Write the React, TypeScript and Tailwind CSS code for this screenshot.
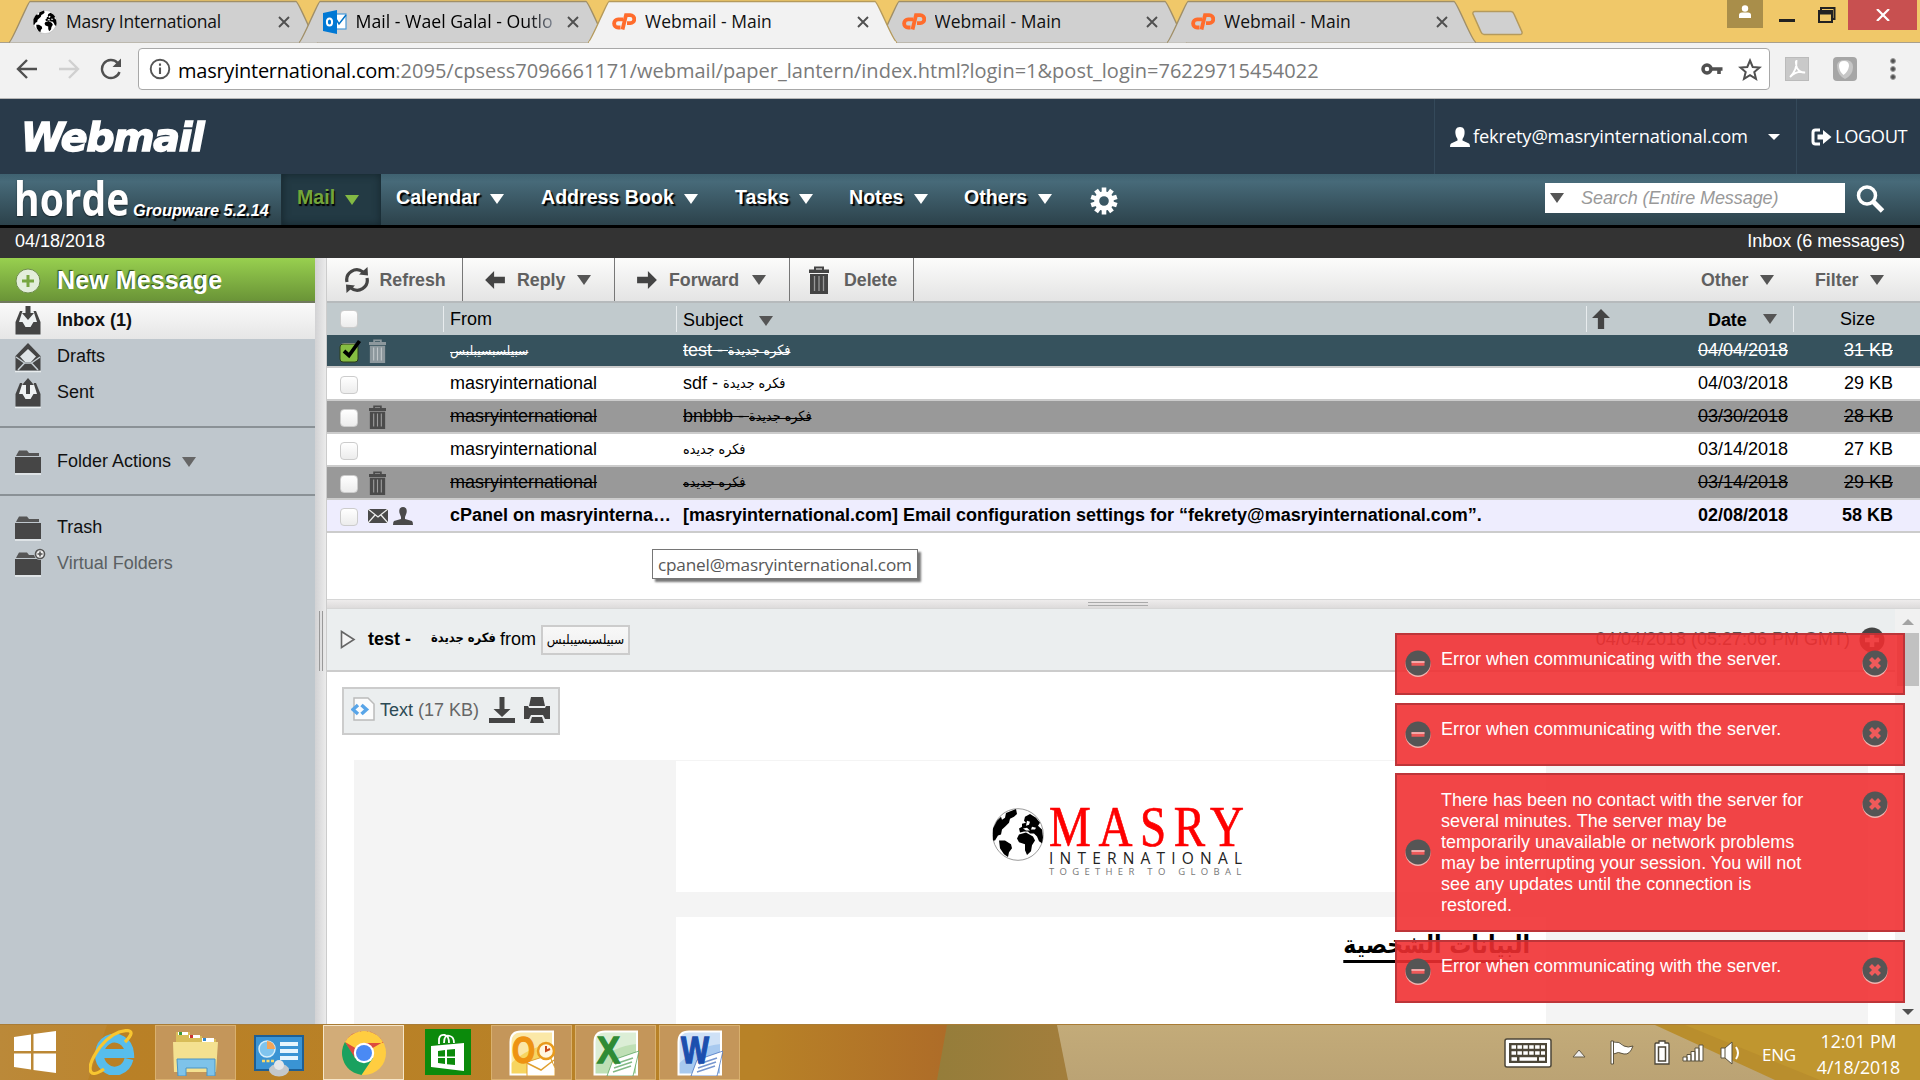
import React from "react";

const ARIAL = "font-['Liberation_Sans',sans-serif]";
const SEGOE = "font-['Open_Sans',sans-serif]";

function Globe({ className }: { className?: string }) {
  return (
    <svg viewBox="0 0 52 54" className={className} preserveAspectRatio="none">
      <ellipse cx="26" cy="27" rx="25.3" ry="26.3" fill="#fff" stroke="#999" strokeWidth="1" />
      <path d="M14 5 L24 1 L25 6 L22 9 L18 11 L17 15 L13 19 L10 22 L9 27 L6 28 L3 33 L1 33 L1 21 L5 13 L9 9 L10 12 L13 10 Z" fill="#000" />
      <path d="M7 33 L13 33 L19 37 L20 41 L17 45 L16 50 L12 47 L8 41 Z" fill="#000" />
      <path d="M33 9 L38 6 L44 10 L48 15 L46 18 L50 22 L51 30 L50 36 L47 34 L45 29 L42 26 L38 26 L36 24 L32 24 L28 25 L27 21 L30 19 L30 16 L34 15 L32 13 Z" fill="#000" />
      <path d="M27 27 L34 25 L41 29 L43 33 L40 38 L39 44 L35 48 L33 43 L33 37 L27 35 L25 31 Z" fill="#000" />
      <path d="M35 13 L38 14 L37 17 L34 18 Z M40 19 L44 20 L43 22 L39 22 Z M31 21 L35 20 L38 23 L34 23 Z" fill="#fff" />
    </svg>
  );
}

function CPanel() {
  return (
    <svg viewBox="0 0 24 17" className="h-[17px] w-6">
      <path d="M11 6.300 H6.200 a3.800 3.800 0 0 0 0 8.200 H8.500" fill="none" stroke="#ff6c2c" strokeWidth="3.800" />
      <path d="M10.500 16.500 L14 2.200 H18.300 a3.700 3.700 0 0 1 0 8 H15" fill="none" stroke="#ff6c2c" strokeWidth="3.800" />
    </svg>
  );
}

function OutlookFav() {
  return (
    <svg viewBox="0 0 24 24" className="size-6">
      <rect x="11" y="4" width="12" height="15" fill="#fff" stroke="#4a9ad8" strokeWidth="1.200" />
      <path d="M13 9 L16 14 L23 5" stroke="#0072c6" fill="none" strokeWidth="1.500" />
      <path d="M0 3 L14 0 V24 L0 21 Z" fill="#0078d4" />
      <ellipse cx="6.500" cy="12" rx="2.600" ry="3.600" fill="none" stroke="#fff" strokeWidth="2" />
    </svg>
  );
}

type TabInfo = { title: string; icon: React.ReactNode; active?: boolean; fade?: boolean };
const tabs: TabInfo[] = [
  { title: "Masry International", icon: <Globe className="size-6" /> },
  { title: "Mail - Wael Galal - Outlo", icon: <OutlookFav />, fade: true },
  { title: "Webmail - Main", icon: <CPanel />, active: true },
  { title: "Webmail - Main", icon: <CPanel /> },
  { title: "Webmail - Main", icon: <CPanel /> },
];

function Tab({ t }: { t: TabInfo }) {
  return (
    <div className={`relative h-[43px] w-[289.500px] shrink-0 ${t.active ? "z-10" : ""}`}>
      <svg viewBox="0 0 309 43" className="absolute left-0 top-0 h-[43px] w-[309px]">
        <path
          d="M0 42.500 C3 42 19 1.500 21 1.500 H287 C290 1.500 305 42 309 42.500"
          fill={t.active ? "#f2f2f2" : "#d0d0d0"}
          stroke={t.active ? "#b59a5c" : "#a08f68"}
          strokeWidth="1.400"
        />
        {t.active && <path d="M1 42.500 H308" stroke="#f2f2f2" strokeWidth="2" />}
      </svg>
      <div className="relative flex h-[43px] items-center pl-6 pr-[9px]">
        <div className="flex w-[33px] shrink-0 items-center">{t.icon}</div>
        <div className={`flex-1 overflow-hidden whitespace-nowrap ${t.fade ? "bg-linear-to-r from-black from-82% to-gray-400 bg-clip-text text-[17.700px] text-transparent" : t.title.startsWith("Masry") ? "text-[17.500px] tracking-[-0.250px] text-[#111]" : "text-[17.500px] text-[#111]"}`}>
          {t.title}
        </div>
        <svg viewBox="0 0 12 12" className="ml-2.5 size-3 shrink-0">
          <path d="M1 1 L11 11 M11 1 L1 11" stroke="#505050" strokeWidth="1.900" />
        </svg>
      </div>
    </div>
  );
}

function Browser() {
  return (
    <div className={`${SEGOE}`}>
      <div className="flex h-[43px] border-b border-[#a9a08c] bg-[#f0c869]">
        <div className="flex w-[1466px] shrink-0 pl-[9px]">
          {tabs.map((t, i) => <Tab key={i} t={t} />)}
        </div>
        <svg viewBox="0 0 52 26" className="ml-1.5 mt-[10px] h-[26px] w-[52px]">
          <path d="M3 1.500 H39 Q41 1.500 42 4 L50 22 Q50.500 24.500 48 24.500 H12 Q10 24.500 9 22 L1 4 Q0.500 1.500 3 1.500Z" fill="#d0d0d0" stroke="#b59a5c" strokeWidth="1.500" />
        </svg>
        <div className="ml-auto flex h-[31px] pr-[3px]">
          <div className="flex h-7 w-9 justify-center bg-[#a98e4a] pt-[5px]">
            <svg viewBox="0 0 14 14" className="size-3.5"><circle cx="7" cy="3.500" r="3.200" fill="#fff" /><path d="M1 13 V10 Q1 7.500 4 7.500 H10 Q13 7.500 13 10 V13 Z" fill="#fff" /></svg>
          </div>
          <div className="ml-4 mt-[19px] h-[3px] w-4 bg-[#222]" />
          <svg viewBox="0 0 20 18" className="ml-[22px] mt-1.5 h-[18px] w-5">
            <path d="M4 4 V2 H17.500 V13 H15" fill="none" stroke="#222" strokeWidth="2" />
            <rect x="2" y="5" width="13" height="11" fill="none" stroke="#222" strokeWidth="2" /><path d="M1 6.500 H16" stroke="#222" strokeWidth="4" />
          </svg>
          <div className="ml-[11px] flex h-[30px] w-[69px] items-center justify-center bg-[#c85050]">
            <svg viewBox="0 0 14 12" className="h-3 w-3.5"><path d="M1 0 L13 12 M13 0 L1 12" stroke="#fff" strokeWidth="2.200" /></svg>
          </div>
        </div>
      </div>
      <div className="flex h-14 items-center border-b border-[#b6b6b6] bg-[#f2f2f2] pb-[3px] pl-4">
        <svg viewBox="0 0 22 20" className="h-5 w-[22px]"><path d="M21 10 H2 M11 1 L2 10 L11 19" fill="none" stroke="#505050" strokeWidth="2.400" /></svg>
        <svg viewBox="0 0 22 20" className="ml-5 h-5 w-[22px]"><path d="M1 10 H20 M11 1 L20 10 L11 19" fill="none" stroke="#d0d0d0" strokeWidth="2.400" /></svg>
        <svg viewBox="0 0 22 22" className="ml-5 size-[22px]"><path d="M19.500 14 A9 9 0 1 1 17.500 4.800" fill="none" stroke="#505050" strokeWidth="2.400" /><path d="M21 0.500 V9 H12.500 Z" fill="#505050" /></svg>
        <div className="ml-4 flex h-[42px] w-[1632px] items-center rounded-[4px] border border-[#a8a8a8] bg-white pl-2.5">
          <svg viewBox="0 0 22 22" className="size-[22px]"><circle cx="11" cy="11" r="9.300" fill="none" stroke="#555" strokeWidth="1.900" /><path d="M11 9.500 V16 M11 5.500 V7.700" stroke="#555" strokeWidth="2.100" /></svg>
          <div className="ml-[7px] mt-[3px] whitespace-nowrap text-[20px] text-[#7a7a7a]">
            <span className="tracking-[-0.240px] text-black">masryinternational.com</span>:2095/cpsess7096661171/webmail/paper_lantern/index.html?login=1&amp;post_login=76229715454022
          </div>
          <svg viewBox="0 0 22 14" className="ml-auto h-3.5 w-[22px]"><circle cx="6" cy="7" r="4" fill="none" stroke="#505050" strokeWidth="3.500" /><path d="M10 7 H21.500 M18 7 V12" stroke="#505050" strokeWidth="3.600" /></svg>
          <svg viewBox="0 0 24 24" className="ml-[15px] mr-[7px] mt-0.5 size-6"><path d="M12 2.500 L14.700 9 L21.500 9.500 L16.300 14 L18 20.800 L12 17.200 L6 20.800 L7.700 14 L2.500 9.500 L9.300 9 Z" fill="none" stroke="#505050" strokeWidth="2" /></svg>
        </div>
        <svg viewBox="0 0 24 24" className="ml-[15px] size-6"><rect x="0.500" y="0.500" width="23" height="23" fill="#c9c9c9" stroke="#bbb" /><path d="M5 20 Q12 13 11.500 4 Q10 4 12 11 Q15 16 20 15.500 Q12 13 5 20" fill="none" stroke="#fff" strokeWidth="1.800" /></svg>
        <svg viewBox="0 0 24 24" className="ml-6 size-6"><rect width="24" height="24" rx="4" fill="#a6a6a6" /><path d="M4 8 Q5 3 12 3 Q20 3 20 10 Q20 18 12 22 Q4 18 4 8" fill="#c6c6c6" /><path d="M6 9 Q6 4 11 4 Q16 4 16 9 Q15 15 10.500 18 Q6 14 6 9" fill="#fff" /></svg>
        <div className="ml-[34px] flex flex-col gap-1">
          <i className="size-1 rounded-full bg-[#505050] outline outline-[#505050]/60" /><i className="size-1 rounded-full bg-[#505050] outline outline-[#505050]/60" /><i className="size-1 rounded-full bg-[#505050] outline outline-[#505050]/60" />
        </div>
      </div>
    </div>
  );
}

function WebmailHeader() {
  return (
    <div className={`flex h-[75px] items-stretch bg-[#293a4a] text-white ${SEGOE}`}>
      <div className="flex items-center pl-[21px] pt-0.5">
        <div className="origin-left scale-x-[1.015] whitespace-nowrap font-['DejaVu_Sans',sans-serif] text-[39px] font-bold italic leading-none tracking-[-1.300px] [-webkit-text-stroke:1.500px_white]">Webmail</div>
      </div>
      <div className="ml-auto flex w-[362px] items-center border-l border-[#34495a] pl-[15px]">
        <svg viewBox="0 0 20 20" className="size-5"><path d="M10 0 C14 0 15 3 14.500 7 C14 10 13 11 12.500 12 V13.500 L19 16.500 Q20 17 20 20 H0 Q0 17 1 16.500 L7.500 13.500 V12 C7 11 6 10 5.500 7 C5 3 6 0 10 0" fill="#fff" /></svg>
        <span className="-mt-0.5 ml-[3px] w-[295px] whitespace-nowrap text-[18.300px] tracking-[-0.150px]">fekrety@masryinternational.com</span>
        <i className="border-x-[6px] border-t-[6px] border-x-transparent border-t-white" />
      </div>
      <div className="flex w-[124px] items-center border-l border-[#34495a] pl-[14px]">
        <svg viewBox="0 0 21 18" className="h-[18px] w-[21px]"><path d="M9 2 H4.500 Q2 2 2 4.500 V13.500 Q2 16 4.500 16 H9" fill="none" stroke="#fff" strokeWidth="3" /><path d="M6.500 6.500 H12 V2 L20.500 9 L12 16 V11.500 H6.500Z" fill="#fff" /></svg>
        <span className="-mt-0.5 ml-[3px] text-[18.300px] tracking-[-0.400px]">LOGOUT</span>
      </div>
    </div>
  );
}

function Tri({ className = "border-t-[#555]" }: { className?: string }) {
  return <i className={`block shrink-0 border-x-[7.500px] border-t-[10px] border-x-transparent ${className}`} />;
}

const nav = [
  { label: "Calendar", w: "w-[145px]", t: "w-[93px]" },
  { label: "Address Book", w: "w-[194px]", t: "w-[142px]" },
  { label: "Tasks", w: "w-[114px]", t: "w-[63px]" },
  { label: "Notes", w: "w-[115px]", t: "w-[64px]" },
  { label: "Others", w: "w-[125px]", t: "w-[73px]" },
];

function HordeBar() {
  return (
    <div className={`flex h-[54px] border-b-[3px] border-black bg-linear-to-b from-[#3f6271] via-[#476a79] via-15% to-[#2c424b] text-white ${ARIAL}`}>
      <div className="flex w-[282px] items-end border-r border-[#1d2f37] pb-[6px] pl-[14px]">
        <div className="w-[119px]">
          <div className="mb-[-4px] origin-left scale-x-[0.830] font-['Open_Sans',sans-serif] text-[47px] font-bold leading-[49px] [text-shadow:0_1px_2px_#0008]">horde</div>
        </div>
        <span className="-mb-px whitespace-nowrap text-[16.300px] font-bold italic leading-5 [text-shadow:2px_2px_1px_#000]">Groupware 5.2.14</span>
      </div>
      <div className="flex w-[99px] items-center bg-[#233a44] pb-1 pl-[15px] shadow-[inset_0_0_8px_#14242b]">
        <span className="w-[48px] text-[19.600px] font-bold text-[#74a63b] [text-shadow:1px_2px_1px_#000]">Mail</span>
        <Tri className="mt-1 border-t-[#83b944]" />
      </div>
      <div className="flex items-center pb-1 pl-[15px]">
        {nav.map((n) => (
          <div key={n.label} className={`flex items-center ${n.w}`}>
            <span className={`${n.t} whitespace-nowrap text-[19.600px] font-bold [text-shadow:2px_2px_1px_#000]`}>{n.label}</span>
            <Tri className="ml-px mt-1 border-t-white" />
          </div>
        ))}
        <svg viewBox="0 0 28 28" className="ml-px mt-1.5 size-7">
          {[0, 36, 72, 108, 144, 180, 216, 252, 288, 324].map((a) => (
            <rect key={a} x="11.700" y="0.500" width="4.600" height="8" fill="#fff" transform={`rotate(${a} 14 14)`} />
          ))}
          <circle cx="14" cy="14" r="7.300" fill="none" stroke="#fff" strokeWidth="5" />
        </svg>
      </div>
      <div className="ml-auto mt-[9px] flex h-[30px] w-[300px] items-center bg-white pl-[5px]">
        <Tri />
        <span className="ml-[17px] whitespace-nowrap text-[18px] italic tracking-[-0.070px] text-[#999]">Search (Entire Message)</span>
      </div>
      <svg viewBox="0 0 30 30" className="ml-[11px] mr-[34px] mt-2.5 size-[30px]">
        <circle cx="11" cy="11.500" r="8.500" fill="none" stroke="#fff" strokeWidth="3.500" /><path d="M17.500 18 L26.500 27" stroke="#fff" strokeWidth="5" />
      </svg>
    </div>
  );
}

function TrayIcon({ kind }: { kind: "in" | "draft" | "out" }) {
  return (
    <svg viewBox="0 0 26 28" className="h-7 w-[26px] overflow-visible">
      <path d="M0 28.500 H26" stroke="#e8ecee" strokeWidth="1.500" />
      {kind === "draft" ? (
        <>
          <path d="M13 0 L25.500 13 V27.500 H0.500 V13 Z" fill="#444" />
          <path d="M13 6 L21 13.500 L16 19 H10 L5 13.500 Z" fill="#dfe4e7" />
          <path d="M1 14 L9.500 20 L3 27 M25 14 L16.500 20 L23 27 M9.500 20 H16.500" fill="none" stroke="#c5cdd2" strokeWidth="1.500" />
        </>
      ) : (
        <>
          <path d="M0.500 27.500 V15 L5 4 H21 L25.500 15 V27.500 Z" fill="#444" />
          <path d="M7.500 4 L4 15 H7.500 L10.500 20 H15.500 L18.500 15 H22 L18.500 4Z" fill="#eef1f2" />
          {kind === "in"
            ? <path d="M10.500 -1 H15.500 V6 H19 L13 13 L7 6 H10.500Z" fill="#444" />
            : <path d="M11 15 H15 V6 H19 L13 -1 L7 6 H11Z" fill="#444" />}
        </>
      )}
    </svg>
  );
}

function Folder({ plus }: { plus?: boolean }) {
  return (
    <svg viewBox="0 0 30 26" className="h-[26px] w-[30px] overflow-visible">
      <path d="M2 5 L4 1.500 H12 L14 4 H24 V7 H1 Z" fill="#555" />
      <path d="M0 8 H26 V24 H0 Z" fill="#464646" /><path d="M0 25 H26" stroke="#e8ecee" strokeWidth="1.500" />
      {plus && <><circle cx="25" cy="3" r="6" fill="#c0c8cd" /><circle cx="25" cy="3" r="4.500" fill="#eee" stroke="#555" strokeWidth="1.600" /><path d="M25 0.500 V5.500 M22.500 3 H27.500" stroke="#555" strokeWidth="1.600" /></>}
    </svg>
  );
}

function SideRow({ icon, label, className = "" }: { icon: React.ReactNode; label: string; className?: string }) {
  return (
    <div className={`flex h-9 items-center pl-[15px] text-[18px] ${className}`}>
      <div className="flex w-[42px] items-center">{icon}</div>
      <span className="-mt-px whitespace-nowrap">{label}</span>
      {label === "Folder Actions" && <Tri className="ml-[11px] border-t-[#666]" />}
    </div>
  );
}

function Sidebar() {
  return (
    <div className="w-[315px] shrink-0 bg-[#bfc7cd] text-[#111]">
      <div className="flex h-[45px] items-center border-b-2 border-[#71795f] bg-linear-to-b from-[#98d04f] to-[#6a9437] pl-[15px] pt-0.5">
        <svg viewBox="0 0 26 26" className="size-[26px]"><circle cx="13" cy="13" r="12" fill="#e3eedb" stroke="#6f8f4c" /><path d="M13 7 V19 M7 13 H19" stroke="#77a640" strokeWidth="3" /></svg>
        <span className="ml-4 whitespace-nowrap text-[25px] font-bold leading-none tracking-[0.120px] text-white [text-shadow:-1px_-1px_1px_#2d4a12]">New Message</span>
      </div>
      <SideRow icon={<TrayIcon kind="in" />} label="Inbox (1)" className="bg-linear-to-b from-[#fafafa] to-[#e6e6e6] font-bold" />
      <SideRow icon={<TrayIcon kind="draft" />} label="Drafts" />
      <SideRow icon={<TrayIcon kind="out" />} label="Sent" />
      <div className="mt-[15px] border-y-2 border-[#8a9196] py-[15px]">
        <SideRow icon={<Folder />} label="Folder Actions" className="pt-px" />
      </div>
      <div className="mt-[13px]">
        <SideRow icon={<Folder />} label="Trash" className="pt-px" />
        <SideRow icon={<Folder plus />} label="Virtual Folders" className="pt-px text-[#5a5f62]" />
      </div>
    </div>
  );
}

function Trash({ className = "", fill = "#444" }: { className?: string; fill?: string }) {
  return (
    <svg viewBox="0 0 20 28" className={className} preserveAspectRatio="none">
      <path d="M6 4 V1.500 H14 V4" fill="none" stroke={fill} strokeWidth="2" />
      <path d="M0 3.500 H20 V7 H0Z M1 8 H19 V28 H1Z" fill={fill} />
      <path d="M5.500 10 V25 M10 10 V25 M14.500 10 V25" stroke="#fff" strokeOpacity="0.450" strokeWidth="1.300" />
    </svg>
  );
}

function Arrow({ className = "" }: { className?: string }) {
  return <svg viewBox="0 0 22 20" className={`h-[18px] w-[22px] ${className}`}><path d="M0 10 L10 0 V6.500 H22 V13.500 H10 V20 Z" fill="#444" /></svg>;
}

function Toolbar() {
  return (
    <div className="flex h-[45px] border-b-2 border-[#b6babc] bg-linear-to-b from-[#fcfcfb] to-[#e4e4e4] text-[17.800px] font-bold text-[#606060]">
      <div className="flex w-[136px] items-center border-r border-[#777] pl-[17px] pt-px">
        <svg viewBox="0 0 26 26" className="size-[26px]"><path d="M3 15 A10 10 0 0 1 19 5 M23 11 A10 10 0 0 1 7 21" fill="none" stroke="#444" strokeWidth="3.200" /><path d="M15 7.500 L24 8.500 L23.500 0Z M11 18.500 L2 17.500 L2.500 26Z" fill="#444" /></svg>
        <span className="ml-[9.500px]">Refresh</span>
      </div>
      <div className="flex w-[152px] items-center border-r border-[#777] pl-[21px] pt-px"><Arrow /><span className="ml-[11px] w-[59.500px]">Reply</span><Tri /></div>
      <div className="flex w-[175px] items-center border-r border-[#777] pl-[21px] pt-px"><Arrow className="rotate-180" /><span className="ml-[11px] w-[83px]">Forward</span><Tri /></div>
      <div className="flex w-[124px] items-center border-r border-[#777] pl-[19px] pt-px"><Trash className="h-7 w-5" /><span className="ml-[15px] tracking-[-0.050px]">Delete</span></div>
      <div className="ml-auto flex items-center pt-px"><span className="w-[59px]">Other</span><Tri /><span className="ml-[41px] w-[55px]">Filter</span><Tri className="mr-9 border-t-[#555]" /></div>
    </div>
  );
}

function Check({ on }: { on?: boolean }) {
  return (
    <div className="relative h-[18px] w-[18px] rounded-[4px] border border-[#ccc] bg-linear-to-b from-white to-[#ececec]">
      {on && (
        <svg viewBox="0 0 24 24" className="absolute -left-[2px] -top-[5px] size-6"><rect x="1" y="5" width="18" height="18" rx="3" fill="#86bd42" stroke="#2c3f1a" /><path d="M5 12 L10 16.500 L20.500 2" fill="none" stroke="#000" strokeWidth="3.800" /></svg>
      )}
    </div>
  );
}

function Ar({ children, className = "text-[14.200px]" }: { children: string; className?: string }) {
  return <span dir="rtl" className={`align-[1px] font-['DejaVu_Sans_Condensed','DejaVu_Sans',sans-serif] font-stretch-condensed leading-none tracking-normal ${className}`}>{children}</span>;
}

type Row = { from: React.ReactNode; subject: React.ReactNode; date: string; size: string; kind: "sel" | "plain" | "del" | "new" };
const rows: Row[] = [
  { from: <Ar className="text-[13.700px]">سبيلسبسيبلبس</Ar>, subject: <>test - <Ar>فكره جديدة</Ar></>, date: "04/04/2018", size: "31 KB", kind: "sel" },
  { from: "masryinternational", subject: <>sdf - <Ar>فكره جديدة</Ar></>, date: "04/03/2018", size: "29 KB", kind: "plain" },
  { from: "masryinternational", subject: <>bnbbb - <Ar>فكره جديدة</Ar></>, date: "03/30/2018", size: "28 KB", kind: "del" },
  { from: "masryinternational", subject: <Ar>فكره جديده</Ar>, date: "03/14/2018", size: "27 KB", kind: "plain" },
  { from: "masryinternational", subject: <Ar>فكره جديده</Ar>, date: "03/14/2018", size: "29 KB", kind: "del" },
  { from: "cPanel on masryinterna…", subject: "[masryinternational.com] Email configuration settings for “fekrety@masryinternational.com”.", date: "02/08/2018", size: "58 KB", kind: "new" },
];
const rowStyle = {
  sel: "bg-[#36525d] text-white",
  plain: "bg-white",
  del: "bg-[#999]",
  new: "bg-[#eeedfe] font-bold",
};

function MessageList() {
  return (
    <div className="relative h-[296px] bg-white text-[18px] text-black">
      <div className="flex h-8 items-center bg-[#c1cacd]">
        <div className="w-[116px] pl-[13px]"><Check /></div>
        <div className="flex h-[26px] w-[233px] items-center border-l border-[#e8ecee] pl-1.5">From</div>
        <div className="flex h-[26px] w-[910px] items-center border-l border-[#e8ecee] pl-1.5 pt-[3px]">Subject<Tri className="ml-4 border-t-[#555]" /></div>
        <div className="flex h-[26px] flex-1 items-center border-l border-[#e8ecee] pl-[3px]">
          <Arrow className="w-5 rotate-90" />
          <span className="ml-[96px] mt-0.5 font-bold tracking-[-0.100px]">Date</span><Tri className="ml-[16px] border-t-[#555]" />
        </div>
        <div className="flex h-[26px] w-[127px] items-center border-l border-[#e8ecee] pl-[46px]">Size</div>
      </div>
      {rows.map((r, i) => {
        const strike = r.kind === "sel" || r.kind === "del" ? "line-through" : "";
        return (
          <div key={i} className={`flex h-[33px] items-center whitespace-nowrap border-b-2 border-[#ccc] ${rowStyle[r.kind]}`}>
            <div className="flex w-[42px] pl-[13px] pt-0.5"><Check on={r.kind === "sel"} /></div>
            <div className="flex w-[81px] items-center gap-[5px]">
              {strike && <Trash className="h-6 w-[17px]" fill={r.kind === "sel" ? "#8d989d" : "#4b4b4b"} />}
              {r.kind === "new" && (
                <>
                  <svg viewBox="0 0 20 14" className="-ml-px h-3.5 w-5"><rect width="20" height="14" fill="#4a4a4a" /><path d="M0 0 L10 8 L20 0 M0 14 L7 6 M20 14 L13 6" fill="none" stroke="#eee" strokeWidth="1.300" /></svg>
                  <svg viewBox="0 0 20 18" className="h-[18px] w-5"><path d="M10 0 C14 0 14 4 13.500 6 L12 10 V12 L19 14 Q20 15 20 18 H0 Q0 15 1 14 L8 12 V10 L6.500 6 C6 4 6 0 10 0" fill="#4a4a4a" /></svg>
                </>
              )}
            </div>
            <div className={`w-[233px] truncate ${strike}`}>{r.from}</div>
            <div className={`flex-1 ${strike}`}>{r.subject}</div>
            <div className={`w-[105px] text-right ${strike}`}>{r.date}</div>
            <div className={`w-[132px] pr-[27px] text-right ${strike}`}>{r.size}</div>
          </div>
        );
      })}
      <div className={`absolute left-[325px] top-[246px] flex h-[30px] w-[266px] items-center whitespace-nowrap border border-[#767676] bg-white pl-[5px] pt-px text-[17.200px] tracking-[-0.200px] text-[#575757] shadow-[3px_3px_2px_#777] ${SEGOE}`}>
        cpanel@masryinternational.com
      </div>
    </div>
  );
}

function Preview() {
  return (
    <div className="flex min-h-0 flex-1">
      <div className="flex w-[1568px] shrink-0 flex-col overflow-hidden bg-white">
        <div className="flex h-[63px] shrink-0 items-center whitespace-nowrap border-b-2 border-[#ccc] bg-[#ebeeef] pl-[13px] text-[18px] text-black">
          <svg viewBox="0 0 16 19" className="h-[19px] w-4"><path d="M1.500 1.500 L14 9.500 L1.500 17.500Z" fill="#f4f4f4" stroke="#666" strokeWidth="1.600" /></svg>
          <b className="ml-3 w-[63px]">test -</b>
          <div className="-mt-0.5 flex w-[69px] items-center"><Ar className="text-[12.800px] font-bold">فكره جديدة</Ar></div>
          <span>from</span>
          <div className="ml-[5px] flex h-[30px] w-[89px] items-center justify-center border-2 border-[#ccc] bg-linear-to-b from-[#f8f8f8] to-[#efefef]"><Ar className="text-[13.500px]">سبيلسبسيبلبس</Ar></div>
          <span className="ml-auto text-[#555]">04/04/2018 (05:27:06 PM GMT)</span>
          <svg viewBox="0 0 26 26" className="ml-[9px] mr-2.5 size-[26px]"><circle cx="13" cy="13" r="12.500" fill="#444" /><path d="M13 6 V20 M6 13 H20" stroke="#eee" strokeWidth="4.500" /></svg>
        </div>
        <div className="ml-[15px] mt-[15px] flex h-12 w-[218px] shrink-0 items-center whitespace-nowrap border-2 border-[#ccc] bg-[#ebeeef] pb-0.5 pl-[7px] text-[18px]">
          <svg viewBox="0 0 24 24" className="-mt-[3px] size-6"><path d="M3 1 H17 L23 7 V23 H3Z" fill="#fcfcfc" stroke="#bbb" strokeWidth="1.500" /><path d="M7 8 L2 12.500 L7 17 M10.500 8 L15.500 12.500 L10.500 17" fill="none" stroke="#59a5e8" strokeWidth="3.500" /></svg>
          <span className="ml-[5px] text-[#2c4a55]">Text</span><span className="ml-[5px] w-[71px] text-[#666]">(17 KB)</span>
          <svg viewBox="0 0 26 26" className="size-[26px]"><path d="M10.500 0 H15.500 V12 H21.500 L13 20 L4.500 12 H10.500Z M0 21 H26 V26 H0Z" fill="#444" /></svg>
          <svg viewBox="0 0 26 26" className="ml-[9px] size-[26px]"><path d="M7 0 H19 L21 9 H5Z M0 9 H4 L5 11 H21 L22 9 H26 V22 H21 L19 18 H7 L5 22 H0Z M8 20 H18 L20 26 H6Z" fill="#444" /></svg>
        </div>
        <div className="ml-[27px] mr-[27px] mt-[25px] flex flex-1 bg-[#f4f4f4] pl-[322px] pr-[322px] pt-px">
          <div className="flex flex-1 flex-col">
            <div className="h-[131px] bg-white pl-[316px] pt-[47px]">
              <div className="flex">
                <Globe className="h-[53px] w-[52px]" />
                <div className="ml-[5px] w-[196px]">
                  <div className="-mt-[3px] h-[45px] origin-left scale-x-[0.840] whitespace-nowrap font-['Liberation_Serif',serif] text-[56px] leading-[45px] tracking-[9px] text-[#fe0000] [-webkit-text-stroke:0.700px_#fe0000]">MASRY</div>
                  <div className="-mt-px whitespace-nowrap font-['Open_Sans',sans-serif] text-[15.500px] leading-[18px] tracking-[6.200px] text-[#222]">INTERNATIONAL</div>
                  <div className="whitespace-nowrap font-['Open_Sans',sans-serif] text-[9.500px] leading-[10px] tracking-[5.300px] text-[#777]">TOGETHER TO GLOBAL</div>
                </div>
              </div>
            </div>
            <div className="mt-[25px] flex-1 bg-white pr-4 pt-[8px]" dir="rtl">
              <span className="font-['DejaVu_Sans_Condensed','DejaVu_Sans',sans-serif] text-[24.500px] font-bold font-stretch-condensed leading-[40px] text-black underline decoration-[3px] underline-offset-[7px]">البيانات الشخصية</span>
            </div>
          </div>
        </div>
      </div>
      <div className="flex flex-1 flex-col items-center bg-[#f1f1f1]">
        <i className="mt-2.5 border-x-[6px] border-b-[6px] border-x-transparent border-b-[#a3a3a3]" />
        <div className="mt-2 h-[53px] w-[22px] bg-[#c1c1c1]" />
        <i className="mb-[9px] mt-auto border-x-[6px] border-t-[6px] border-x-transparent border-t-[#505050]" />
      </div>
    </div>
  );
}

function Round({ x }: { x?: boolean }) {
  return (
    <svg viewBox="0 0 26 28" className="h-7 w-[26px] shrink-0">
      <circle cx="13" cy="14.500" r="12.500" fill="#f0b5b0" /><circle cx="13" cy="13" r="12.500" fill="#555" />
      {x ? <path d="M8.500 8.500 L17.500 17.500 M17.500 8.500 L8.500 17.500" stroke="#ef5a5a" strokeWidth="4.200" /> : <><path d="M6.500 13.500 H19.500" stroke="#ee5a5a" strokeWidth="4.500" /><path d="M6.500 12 H19.500" stroke="#f6c4c4" strokeWidth="1.500" /></>}
    </svg>
  );
}

function Toast({ text, className }: { text: string; className: string }) {
  return (
    <div className={`flex border-2 border-[#b43237]/85 bg-[#f02e30]/89 pl-2 pr-[15px] text-[18px] leading-[21px] text-white ${className}`}>
      <div className="flex items-center"><Round /></div>
      <p className="ml-[10px] w-[372px] pt-[14px]">{text}</p>
      <div className="ml-auto pt-[15px]"><Round x /></div>
    </div>
  );
}

const oneLine = "Error when communicating with the server.";

function TaskButton({ children, active, className = "" }: { children: React.ReactNode; active?: boolean; className?: string }) {
  return <div className={`flex h-[55px] w-[81px] shrink-0 items-center justify-center border ${active ? "border-[#f6e6c8] bg-[#d2ac78]" : "border-[#d9b06e] bg-[#c4965a]"} ${className}`}>{children}</div>;
}

function Office({ letter, color, light }: { letter: string; color: string; light: string }) {
  return (
    <svg viewBox="0 0 46 46" className="size-[46px]">
      <path d="M1.500 12 Q1.500 1.500 12 1.500 H44 V44.500 H1.500Z" fill={light} stroke="#fff" strokeWidth="2" />
      <path d="M1.500 12 Q1.500 1.500 12 1.500 H44 V14 Q20 16 1.500 34Z" fill="#fff" opacity="0.450" />
      {letter === "O" ? (
        <>
          <path d="M18 32 L40 25 L46 38 V46 H18Z" fill="#fff" stroke="#e0a030" /><path d="M18 33 L32 40 L45 30" fill="none" stroke="#e0a030" strokeWidth="1.500" />
          <circle cx="37" cy="21" r="8" fill="#fff6e0" stroke="#e89a1c" strokeWidth="2.500" /><path d="M37 16 V21 L41 19" stroke="#c84818" strokeWidth="2" fill="none" />
        </>
      ) : (
        <><path d="M20 30 L46 21 L40 46 H14Z" fill="#fff" stroke={color} strokeWidth="0.600" /><path d="M22 34 L40 28 M21 38 L39 32 M20 42 L38 36" stroke={color} strokeWidth="1.500" opacity="0.600" /></>
      )}
      <text x={letter === "O" ? 3 : 4} y="33" fontSize="36" fontWeight="900" fontFamily="Liberation Sans" fill={color} stroke={color} strokeWidth="1.300" textLength={letter === "W" ? 28 : 23} lengthAdjust="spacingAndGlyphs">{letter}</text>
    </svg>
  );
}

function Wallpaper() {
  return (
    <svg viewBox="0 0 1920 55" className="absolute inset-0 h-[55px] w-[1920px]" preserveAspectRatio="none">
      <defs>
        <linearGradient id="warm"><stop offset="0" stopColor="#b8832f" /><stop offset="0.100" stopColor="#b98026" /><stop offset="0.800" stopColor="#b88227" /><stop offset="1" stopColor="#ae6c28" /></linearGradient>
        <linearGradient id="olive"><stop offset="0" stopColor="#957d3a" /><stop offset="1" stopColor="#a37e3c" /></linearGradient>
        <linearGradient id="sand" x2="0" y2="1"><stop offset="0" stopColor="#c3ab79" /><stop offset="1" stopColor="#bba374" /></linearGradient>
      </defs>
      <path d="M0 0 H948 L938 55 H0Z" fill="url(#warm)" />
      <path d="M0 0 H107 L88 55 H0Z" fill="#fff" opacity="0.050" />
      <path d="M947 0 H1058 L1069 55 H937Z" fill="url(#olive)" />
      <path d="M1057 0 H1920 V55 H1068Z" fill="url(#sand)" />
      <path d="M1655 0 H1920 V55 H1775Z" fill="#b98e2d" />
      <path d="M1685 0 H1920 V55 H1820Z" fill="#c0962f" />
    </svg>
  );
}

function Taskbar() {
  return (
    <div className={`relative flex h-14 items-start border-t border-[#a97c35] text-white ${SEGOE}`}>
      <Wallpaper />
      <div className="relative flex w-full items-start">
        <svg viewBox="0 0 42 42" className="ml-3.5 mt-1.5 size-[42px]"><path d="M0 6 L17 3.500 V20 H0Z M19.500 3 L42 0 V20 H19.500Z M0 22.500 H17 V38.500 L0 36Z M19.500 22.500 H42 V42 L19.500 39Z" fill="#fff" /></svg>
        <svg viewBox="0 0 46 46" className="ml-[33px] mt-1 size-[46px]">
          <path d="M40 30 A15 16.500 0 1 1 40.500 24.500 H14" fill="none" stroke="#57bdec" strokeWidth="9" />
          <path d="M36 13 Q47 2 38 1.500 Q24 2 11 18 Q-2 36 2 43 Q5 47 15 40" fill="none" stroke="#f8c630" strokeWidth="3.200" />
        </svg>
        <TaskButton className="ml-5">
          <svg viewBox="0 0 48 46" className="h-[46px] w-12"><path d="M4 2 H18 V6 H30 V9 H44 V40 H4Z" fill="#d8bd58" /><path d="M6 2 H16 V5 H6Z M17 5 H28 V8 H17Z M30 8 H42 V12 H30Z" fill="#fff" /><path d="M7 2 H10 V5 H7Z" fill="#3b9a3b" /><path d="M18 5 H21 V8 H18Z" fill="#c33" /><path d="M31 8 H34 V11 H31Z" fill="#38c" /><path d="M1 12 H46 L44 42 H2Z" fill="#f4e190" /><path d="M5 29 H43 V46 H35 V38 H14 V46 H6Z" fill="#7ec3ea" stroke="#4a94c4" /></svg>
        </TaskButton>
        <svg viewBox="0 0 50 42" className="ml-[18px] mt-[10px] h-[42px] w-[50px]"><rect x="1" y="1" width="48" height="34" fill="#3a94d4" stroke="#1e5f94" strokeWidth="2" /><circle cx="13" cy="14" r="8" fill="#7fc4ee" stroke="#d6effc" strokeWidth="1.500" /><path d="M13 14 V6 A8 8 0 0 1 21 14Z" fill="#f2a65a" /><path d="M26 9 H44 M26 16 H44 M26 23 H44" stroke="#e6f5fd" strokeWidth="4" /><path d="M8 26 H20" stroke="#f8d86a" strokeWidth="2.500" strokeDasharray="3 1.500" /><ellipse cx="25" cy="35" rx="10" ry="6.500" fill="#c4c8cb" /><circle cx="25" cy="30" r="5" fill="#e4e6e8" /></svg>
        <TaskButton active className="ml-[19px]">
          <svg viewBox="0 0 44 44" className="size-11"><circle cx="22" cy="22" r="22" fill="#ffcd40" /><path d="M22 22 L2.950 11 A22 22 0 0 1 41.050 11 Z M2.950 11 L12 27 L22 12 H41.500 A22 22 0 0 0 2.950 11Z" fill="#dd4b3e" /><path d="M2.950 11 A22 22 0 0 0 19.500 43.900 L31 27 L22 22 L13 27 Z" fill="#1aa15f" /><circle cx="22" cy="22" r="10.200" fill="#fff" /><circle cx="22" cy="22" r="8" fill="#4a8af4" /></svg>
        </TaskButton>
        <svg viewBox="0 0 46 46" className="ml-[21px] mt-1 size-[46px]"><rect width="46" height="46" fill="#0b8a0b" /><path d="M6 17 L39 14 V42 L6 38Z" fill="#fff" /><path d="M14 15 V10 Q15 5 20 6 Q24 7 24 14 M19 14 Q19 5 25 7 Q29 8 29 14" fill="none" stroke="#fff" strokeWidth="1.800" /><path d="M13 22 L20 21 V27.500 H13Z M22 20.700 L30 20 V27.500 H22Z M13 29 H20 V35 L13 34Z M22 29 H30 V36 L22 35.200Z" fill="#0b8a0b" /></svg>
        <TaskButton className="ml-5"><Office letter="O" color="#ee9312" light="#f7d560" /></TaskButton>
        <TaskButton className="ml-[3px]"><Office letter="X" color="#2f8b35" light="#bfe0b5" /></TaskButton>
        <TaskButton className="ml-[3px]"><Office letter="W" color="#1c4fae" light="#a8c9ef" /></TaskButton>
        <div className="ml-auto flex h-[55px] w-[420px] items-center">
          <svg viewBox="0 0 48 30" className="ml-1 h-[30px] w-12"><rect x="1" y="1" width="46" height="28" rx="2" fill="#fff" stroke="#4c4638" strokeWidth="1.500" /><rect x="5" y="5" width="38" height="20" fill="#4c4638" /><path d="M7.500 9 H41 M7.500 15 H41" stroke="#fff" strokeWidth="3.500" strokeDasharray="4.500 1.400" /><path d="M7.500 21 H13 M15.500 21 H33 M35 21 H41" stroke="#fff" strokeWidth="3.500" /></svg>
          <svg viewBox="0 0 14 9" className="ml-[20px] mt-0.5 h-[9px] w-3.5"><path d="M7 1 L13 8 H1Z" fill="#eee" stroke="#665c45" /></svg>
          <svg viewBox="0 0 24 26" className="ml-[24px] h-[26px] w-6"><path d="M1 1 H3.500 V24 H1Z" fill="#fff" stroke="#5b523e" /><path d="M3.500 2 Q9 1 14 6 Q18 8 23 6 Q20 15 14 14 Q8 11 3.500 14Z" fill="#fff" stroke="#5b523e" /></svg>
          <svg viewBox="0 0 16 26" className="ml-[20px] h-[26px] w-4"><path d="M5 1 H11 V3 H14 Q15 3 15 4.500 V24 H1 V4.500 Q1 3 2 3 H5Z" fill="#fff" stroke="#4c4638" strokeWidth="1.300" /><rect x="4.500" y="7" width="7" height="14" fill="#fff" stroke="#4c4638" strokeWidth="1.500" /></svg>
          <svg viewBox="0 0 22 18" className="ml-[12px] h-[18px] w-[22px]"><path d="M1 13 H5 V17 H1Z M5 10.500 H9 V17 H5Z M9 7.500 H13 V17 H9Z M13 4 H17 V17 H13Z M17 1 H21 V17 H17Z" fill="#fff" stroke="#5b523e" /></svg>
          <svg viewBox="0 0 22 24" className="ml-4 h-6 w-[22px]"><path d="M1 7 H5 L12 1 V23 L5 17 H1Z" fill="#fff" stroke="#5b523e" /><path d="M5 7 V17" stroke="#5b523e" /><path d="M16 6 Q20 12 16 18" fill="none" stroke="#fff" strokeWidth="2" /></svg>
          <span className="ml-5 w-[46px] pt-[5px] text-[17px] tracking-[-0.300px]">ENG</span>
          <div className="w-[102px] whitespace-nowrap pr-px pt-[3px] text-center text-[17.800px] leading-[26px] tracking-[-0.100px]">12:01 PM<br />4/18/2018</div>
        </div>
      </div>
    </div>
  );
}

export default function App() {
  return (
    <div className="flex h-[1080px] w-[1920px] flex-col overflow-hidden bg-white">
      <Browser />
      <WebmailHeader />
      <HordeBar />
      <div className={`flex h-[30px] shrink-0 items-center justify-between bg-[#333] px-[15px] pb-1 text-[18px] text-white ${ARIAL}`}>
        <span>04/18/2018</span><span className="tracking-[-0.020px]">Inbox (6 messages)</span>
      </div>
      <div className={`relative flex min-h-0 flex-1 ${ARIAL}`}>
        <Sidebar />
        <div className="flex w-3 shrink-0 items-start justify-center border-r border-[#ccc] bg-linear-to-r from-[#d2d2d4] to-[#ebebeb] pt-[353px]">
          <div className="h-[60px] w-1 border-x border-[#999]" />
        </div>
        <div className="flex min-w-0 flex-1 flex-col">
          <Toolbar />
          <MessageList />
          <div className="flex h-[10px] shrink-0 items-center justify-center border-y border-[#d6d6d6] bg-linear-to-b from-[#eeecec] to-[#dddbdb]">
            <div className="-ml-[11px] h-1 w-[60px] border-y border-[#aaa]" />
          </div>
          <Preview />
        </div>
        <div className="absolute right-[15px] top-[375px] w-[510px]">
          <Toast text={oneLine} className="h-[62px]" />
          <Toast text={oneLine} className="mt-2 h-[63px]" />
          <Toast text="There has been no contact with the server for several minutes. The server may be temporarily unavailable or network problems may be interrupting your session. You will not see any updates until the connection is restored." className="mt-[7px] h-[159px] pt-px" />
          <Toast text={oneLine} className="mt-2 h-[63px]" />
        </div>
      </div>
      <Taskbar />
    </div>
  );
}
